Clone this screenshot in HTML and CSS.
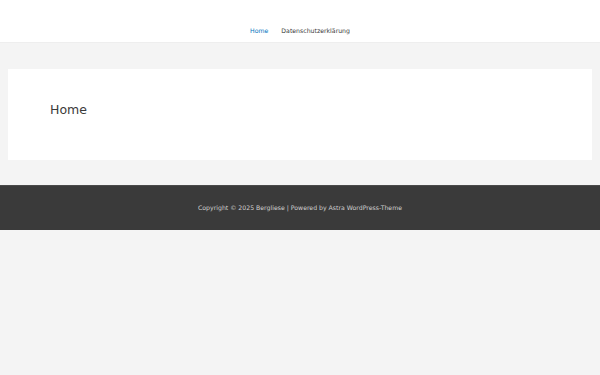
FILE: index.html
```html
<!DOCTYPE html>
<html lang="de">
<head>
<meta charset="utf-8">
<title>Bergliese</title>
<link rel="stylesheet" href="styles.css">
</head>
<body>
<header class="site-header">
  <nav class="main-nav">
    <a class="nav-link active" href="#">Home</a>
    <a class="nav-link" href="#">Datenschutzerklärung</a>
  </nav>
</header>
<main class="content">
  <article class="card">
    <h1 class="entry-title">Home</h1>
  </article>
</main>
<footer class="site-footer">
  <p class="copyright">Copyright © 2025 Bergliese | Powered by Astra WordPress-Theme</p>
</footer>
</body>
</html>
```
FILE: styles.css
```css
html, body {
  margin: 0;
  padding: 0;
}
body {
  background: #f4f4f4;
  font-family: "DejaVu Sans", sans-serif;
  color: #3a3a3a;
  height: 375px;
}
.site-header {
  background: #ffffff;
  height: 43px;
  border-bottom: 1px solid #eeeeee;
  box-sizing: border-box;
  display: flex;
  justify-content: center;
  align-items: flex-start;
}
.main-nav {
  display: flex;
  gap: 13px;
  padding-top: 27px;
}
.nav-link {
  font-size: 6.2px;
  line-height: 8px;
  color: #3a3a3a;
  text-decoration: none;
}
.nav-link.active {
  color: #0274be;
}
.content {
  padding: 26px 8px 25px;
}
.card {
  background: #ffffff;
  height: 91px;
  padding: 0 42px;
  display: flex;
  align-items: center;
}
.entry-title {
  margin: 0;
  font-size: 12.5px;
  font-weight: 400;
  color: #3a3a3a;
  padding-bottom: 10px;
}
.site-footer {
  background: #3a3a3a;
  border-top: 1px solid #4a4a4a;
  height: 45px;
  box-sizing: border-box;
  display: flex;
  justify-content: center;
  align-items: center;
}
.copyright {
  margin: 0;
  font-size: 6.2px;
  color: #d0d0d0;
  padding-bottom: 2px;
}
```
